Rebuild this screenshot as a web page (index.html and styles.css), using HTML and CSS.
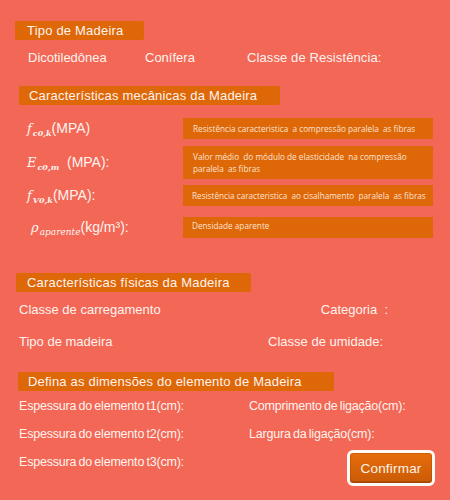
FILE: index.html
```html
<!DOCTYPE html>
<html lang="pt">
<head>
<meta charset="utf-8">
<link rel="stylesheet" href="styles.css">
</head>
<body>
<div class="page">
  <div class="hdr hdr-tipo">Tipo de Madeira</div>
  <div class="row-tipo">
    <span class="c1">Dicotiledônea</span>
    <span class="c2">Conífera</span>
    <span class="c3">Classe de Resistência:</span>
  </div>

  <div class="hdr hdr-mec">Características mecânicas da Madeira</div>
  <div class="mec">
    <div class="mrow r1">
      <div class="lbl"><span class="m">f</span><sub class="ms">c0,k</sub>(MPA)</div>
      <div class="box">Resistência caracteristica &nbsp;a compressão paralela &nbsp;as fibras</div>
    </div>
    <div class="mrow r2">
      <div class="lbl"><span class="m">E</span><sub class="ms">c0,m</sub>&nbsp; (MPA):</div>
      <div class="box">Valor médio &nbsp;do módulo de elasticidade &nbsp;na compressão<br>paralela &nbsp;as fibras</div>
    </div>
    <div class="mrow r3">
      <div class="lbl"><span class="m">f</span><sub class="ms">V0,k</sub>(MPA):</div>
      <div class="box">Resistência caracteristica &nbsp;ao cisalhamento &nbsp;paralela &nbsp;as fibras</div>
    </div>
    <div class="mrow r4">
      <div class="lbl rho"><span class="m">ρ</span><sub class="ms">aparente</sub>(kg/m³):</div>
      <div class="box">Densidade aparente</div>
    </div>
  </div>

  <div class="hdr hdr-fis">Características físicas da Madeira</div>
  <div class="frow f1">
    <span class="fl">Classe de carregamento</span>
    <span class="fr1">Categoria &nbsp;:</span>
  </div>
  <div class="frow f2">
    <span class="fl">Tipo de madeira</span>
    <span class="fr2">Classe de umidade:</span>
  </div>

  <div class="hdr hdr-dim">Defina as dimensões do elemento de Madeira</div>
  <div class="dim">
    <div class="drow"><span class="dl">Espessura do elemento t1(cm):</span><span class="dr">Comprimento de ligação(cm):</span></div>
    <div class="drow"><span class="dl">Espessura do elemento t2(cm):</span><span class="dr">Largura da ligação(cm):</span></div>
    <div class="drow last"><span class="dl">Espessura do elemento t3(cm):</span><button class="btn">Confirmar</button></div>
  </div>
</div>
</body>
</html>
```

FILE: styles.css
```css
html, body {
  margin: 0;
  padding: 0;
}
body {
  background: #f26756;
  width: 450px;
  height: 500px;
  overflow: hidden;
  font-family: "Liberation Sans", Arial, sans-serif;
  font-size: 13px;
  color: #fff3ee;
}
.page {
  padding-top: 21px;
}
.hdr {
  background: #de6707;
  height: 19px;
  line-height: 19px;
  border-radius: 2px;
  box-sizing: border-box;
  font-size: 13px;
  letter-spacing: 0.2px;
}
.hdr-tipo {
  margin-left: 15px;
  width: 129px;
  padding-left: 12px;
}
.row-tipo {
  display: flex;
  height: 16px;
  line-height: 16px;
  margin-top: 10px;
}
.row-tipo .c1 { margin-left: 28px; width: 117px; }
.row-tipo .c2 { width: 102px; }
.row-tipo .c3 { letter-spacing: 0.1px; }

.hdr-mec {
  margin-top: 20px;
  margin-left: 19px;
  width: 261px;
  padding-left: 10px;
}
.mec {
  margin-top: 13px;
  display: flex;
  flex-direction: column;
}
.mrow {
  display: flex;
  align-items: center;
}
.r2 { margin-top: 7px; }
.r3 { margin-top: 6px; }
.r4 { margin-top: 11px; }
.lbl {
  width: 156px;
  margin-left: 27px;
  font-size: 14px;
  white-space: nowrap;
}
.lbl.rho {
  margin-left: 31px;
  width: 152px;
}
.m {
  font-family: "DejaVu Serif", "Liberation Serif", serif;
  font-style: italic;
  font-size: 13px;
}
.ms {
  font-family: "DejaVu Serif", "Liberation Serif", serif;
  font-style: italic;
  font-weight: bold;
  font-size: 8px;
  vertical-align: -3px;
  margin-left: 1px;
}
.rho .ms {
  font-weight: normal;
  font-size: 9px;
}
.box {
  width: 250px;
  box-sizing: border-box;
  background: #de6707;
  font-family: "Open Sans", "DejaVu Sans", sans-serif;
  font-size: 8.2px;
  color: #fbe3d4;
  padding-left: 10px;
  padding-right: 2px;
  white-space: nowrap;
  overflow: hidden;
}
.r1 .box { height: 21px; line-height: 21px; }
.r2 .box { height: 33px; line-height: 12px; padding-top: 5px; }
.r3 .box { height: 21px; line-height: 21px; padding-left: 9px; }
.r4 .box { height: 21px; line-height: 14px; padding-top: 2px; padding-left: 9px; }

.hdr-fis {
  margin-top: 35px;
  margin-left: 16px;
  width: 235px;
  padding-left: 11px;
}
.frow {
  display: flex;
  height: 16px;
  line-height: 16px;
}
.f1 { margin-top: 10px; }
.f2 { margin-top: 16px; }
.fl { margin-left: 19px; }
.fr1 { margin-left: auto; margin-right: 62px; }
.fr2 { margin-left: auto; margin-right: 67px; }

.hdr-dim {
  margin-top: 22px;
  margin-left: 18px;
  width: 316px;
  padding-left: 10px;
}
.dim {
  margin-top: 7px;
}
.drow {
  display: flex;
  align-items: flex-start;
  height: 28px;
  line-height: 16px;
  font-size: 12.5px;
  letter-spacing: -0.2px;
  word-spacing: -1px;
}
.dl { margin-left: 19px; width: 230px; }
.btn {
  margin-left: 98px;
  margin-top: -4px;
  width: 88px;
  height: 36px;
  border: 3px solid #fffaf5;
  border-radius: 6px;
  background: linear-gradient(#e76d0c, #c95b05);
  box-shadow: inset 0 -2px 0 rgba(120,50,0,0.35), inset 0 0 0 1px rgba(150,60,0,0.3);
  color: #fff3ea;
  font-family: "Liberation Sans", Arial, sans-serif;
  font-size: 13.5px;
  letter-spacing: 0.2px;
  padding: 0;
}
```
